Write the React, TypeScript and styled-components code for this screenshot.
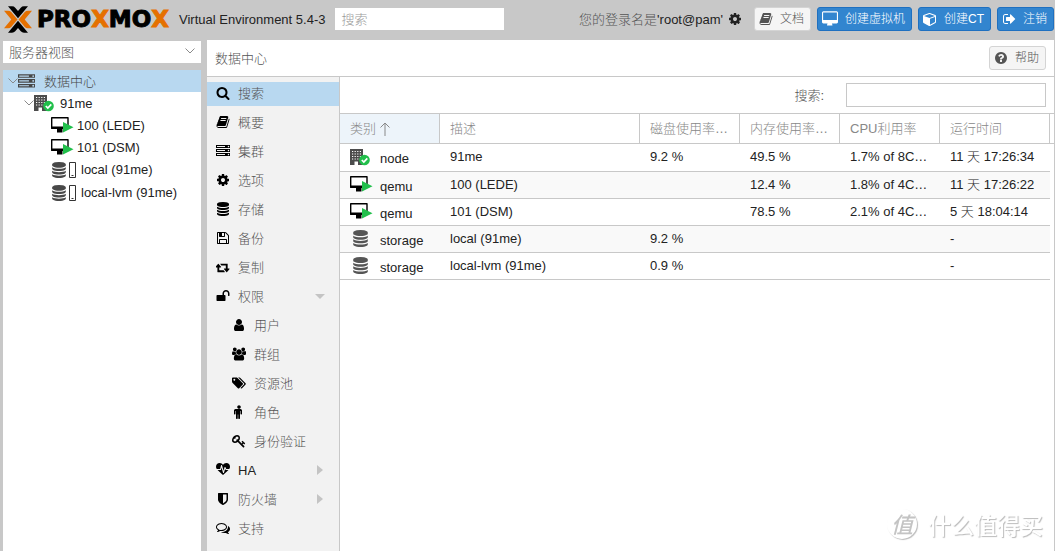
import React from 'react';
import styled, { createGlobalStyle } from 'styled-components';

const GlobalStyle = createGlobalStyle`
  *, *::before, *::after { box-sizing: border-box; }
  body {
    margin: 0;
    background: #c8c8c8;
    color: #222;
    font: 300 13px/17px "Liberation Sans", "Noto Sans CJK SC", sans-serif;
  }
  button, input, select { font: inherit; color: inherit; }
  ul { list-style: none; margin: 0; padding: 0; }
`;

/* ---------- icons ---------- */

const paths = {
  search: { w: 1792, d: 'M1216 832q0-185-131.5-316.5t-316.5-131.5-316.5 131.5-131.5 316.5 131.5 316.5 316.5 131.5 316.5-131.5 131.5-316.5zm512 832q0 52-38 90t-90 38q-54 0-90-38l-343-342q-179 124-399 124-143 0-273.5-55.5t-225-150-150-225-55.5-273.5 55.5-273.5 150-225 225-150 273.5-55.5 273.5 55.5 225 150 150 225 55.5 273.5q0 220-124 399l343 343q37 37 37 90z' },
  book: { w: 1792, d: 'M1703 478q40 57 18 129l-275 906q-19 64-76.5 107.5t-122.5 43.5h-923q-77 0-148.5-53.5t-99.5-131.5q-24-67-2-127 0-4 3-27t4-37q1-8-3-21.5t-3-19.5q2-11 8-21t16.5-23.5 16.5-23.5q23-38 45-91.5t30-91.5q3-10 .5-30t-.5-28q3-11 17-28t17-23q21-36 42-92t25-90q1-9-2.5-32t.5-28q4-13 22-30.5t22-22.5q19-26 42.5-84.5t27.5-96.5q1-8-3-25.5t-2-26.5q2-8 9-18t18-23 17-21q8-12 16.5-30.5t15-35 16-36 19.5-32 26.5-23.5 36-11.5 47.5 5.5l-1 3q38-9 51-9h761q74 0 114 56t18 130l-274 906q-36 119-71.5 153.5t-128.5 34.5h-869q-27 0-38 15-11 16-1 43 24 70 144 70h923q29 0 56-15.5t35-41.5l300-987q7-22 5-57 38 15 59 43zm-1064 2q-4 13 2 22.5t20 9.5h608q13 0 25.5-9.5t16.5-22.5l21-64q4-13-2-22.5t-20-9.5h-608q-13 0-25.5 9.5t-16.5 22.5zm-83 256q-4 13 2 22.5t20 9.5h608q13 0 25.5-9.5t16.5-22.5l21-64q4-13-2-22.5t-20-9.5h-608q-13 0-25.5 9.5t-16.5 22.5z' },
  server: { w: 1792, d: 'M128 1408h1024v-128h-1024v128zm0-512h1024v-128h-1024v128zm1568 448q0-40-28-68t-68-28-68 28-28 68 28 68 68 28 68-28 28-68zm-1568-960h1024v-128h-1024v128zm1568 448q0-40-28-68t-68-28-68 28-28 68 28 68 68 28 68-28 28-68zm0-512q0-40-28-68t-68-28-68 28-28 68 28 68 68 28 68-28 28-68zm96 832v384h-1792v-384h1792zm0-512v384h-1792v-384h1792zm0-512v384h-1792v-384h1792z' },
  gear: { w: 1792, d: 'M1152 896q0-106-75-181t-181-75-181 75-75 181 75 181 181 75 181-75 75-181zm512-109v222q0 12-8 23t-20 13l-185 28q-19 54-39 91 35 50 107 138 10 12 10 25t-9 23q-27 37-99 108t-94 71q-12 0-26-9l-138-108q-44 23-91 38-16 136-29 186-7 28-36 28h-222q-14 0-24.5-8.5t-11.5-21.5l-28-184q-49-16-90-37l-141 107q-10 9-25 9-14 0-25-11-126-114-165-168-7-10-7-23 0-12 8-23 15-21 51-66.5t54-70.5q-27-50-41-99l-183-27q-13-2-21-12.5t-8-23.5v-222q0-12 8-23t19-13l186-28q14-46 39-92-40-57-107-138-10-12-10-24 0-10 9-23 26-36 98.5-107.5t94.5-71.5q13 0 26 10l138 107q44-23 91-38 16-136 29-186 7-28 36-28h222q14 0 24.5 8.5t11.5 21.5l28 184q49 16 90 37l142-107q9-9 24-9 13 0 25 10 129 119 165 170 7 8 7 22 0 12-8 23-15 21-51 66.5t-54 70.5q26 50 41 98l183 28q13 2 21 12.5t8 23.5z' },
  database: { w: 1792, d: 'M896 768q237 0 443-43t325-127v170q0 69-103 128t-280 93.5-385 34.5-385-34.5-280-93.5-103-128v-170q119 84 325 127t443 43zm0 768q237 0 443-43t325-127v170q0 69-103 128t-280 93.5-385 34.5-385-34.5-280-93.5-103-128v-170q119 84 325 127t443 43zm0-384q237 0 443-43t325-127v170q0 69-103 128t-280 93.5-385 34.5-385-34.5-280-93.5-103-128v-170q119 84 325 127t443 43zm0-1152q208 0 385 34.5t280 93.5 103 128v128q0 69-103 128t-280 93.5-385 34.5-385-34.5-280-93.5-103-128v-128q0-69 103-128t280-93.5 385-34.5z' },
  floppy: { w: 1792, d: 'M512 1536h768v-384h-768v384zm896 0h128v-896q0-14-10-38.5t-20-34.5l-281-281q-10-10-34-20t-39-10v416q0 40-28 68t-68 28h-576q-40 0-68-28t-28-68v-416h-128v1280h128v-416q0-40 28-68t68-28h832q40 0 68 28t28 68v416zm-384-928v-320q0-13-9.5-22.5t-22.5-9.5h-192q-13 0-22.5 9.5t-9.5 22.5v320q0 13 9.5 22.5t22.5 9.5h192q13 0 22.5-9.5t9.5-22.5zm640 32v928q0 40-28 68t-68 28h-1344q-40 0-68-28t-28-68v-1344q0-40 28-68t68-28h928q40 0 88 20t76 48l280 280q28 28 48 76t20 88z' },
  retweet: { w: 1920, d: 'M1216 1568q0 13-9.5 22.5t-22.5 9.5h-960q-8 0-13.5-2t-9-7-5.5-8-3-11.5-1-11.5v-600h-192q-26 0-45-19t-19-45q0-24 15-41l320-384q19-22 49-22t49 22l320 384q15 17 15 41 0 26-19 45t-45 19h-192v384h576q16 0 25 11l160 192q7 10 7 21zm640-416q0 24-15 41l-320 384q-20 23-49 23t-49-23l-320-384q-15-17-15-41 0-26 19-45t45-19h192v-384h-576q-16 0-25-12l-160-192q-7-9-7-20 0-13 9.5-22.5t22.5-9.5h960q8 0 13.5 2t9 7 5.5 8 3 11.5 1 11.5v600h192q26 0 45 19t19 45z' },
  unlock: { w: 1792, d: 'M1728 576v256q0 26-19 45t-45 19h-64q-26 0-45-19t-19-45v-256q0-106-75-181t-181-75-181 75-75 181v192h96q40 0 68 28t28 68v576q0 40-28 68t-68 28h-960q-40 0-68-28t-28-68v-576q0-40 28-68t68-28h672v-192q0-185 131.5-316.5t316.5-131.5 316.5 131.5 131.5 316.5z' },
  user: { w: 1792, d: 'M1536 1399q0 109-62.5 187t-150.5 78h-854q-88 0-150.5-78t-62.5-187q0-85 8.5-160.5t31.5-152 58.5-131 94-89 134.5-34.5q131 128 313 128t313-128q76 0 134.5 34.5t94 89 58.5 131 31.5 152 8.5 160.5zm-256-887q0 159-112.5 271.5t-271.5 112.5-271.5-112.5-112.5-271.5 112.5-271.5 271.5-112.5 271.5 112.5 112.5 271.5z' },
  users: { w: 1920, d: 'M593 896q-162 5-265 128h-134q-82 0-138-40.5t-56-118.5q0-353 124-353 6 0 43.5 21t97.5 42.5 119 21.5q67 0 133-23-5 37-5 66 0 159 93 293zm1071 637q0 120-73 189.5t-194 69.5h-874q-121 0-194-69.5t-73-189.5q0-53 3.5-103.5t14-109 26.5-108.5 43-97.5 62-81 85.5-53.5 111.5-20q10 0 43 21.5t73 48 107 48 135 21.5 135-21.5 107-48 73-48 43-21.5q61 0 111.5 20t85.5 53.5 62 81 43 97.5 26.5 108.5 14 109 3.5 103.5zm-1024-1277q0 106-75 181t-181 75-181-75-75-181 75-181 181-75 181 75 75 181zm704 384q0 159-112.5 271.5t-271.5 112.5-271.5-112.5-112.5-271.5 112.5-271.5 271.5-112.5 271.5 112.5 112.5 271.5zm576 225q0 78-56 118.5t-138 40.5h-134q-103-123-265-128 93-134 93-293 0-29-5-66 66 23 133 23 59 0 119-21.5t97.5-42.5 43.5-21q124 0 124 353zm-128-609q0 106-75 181t-181 75-181-75-75-181 75-181 181-75 181 75 75 181z' },
  tags: { w: 1920, d: 'M448 448q0-53-37.5-90.5t-90.5-37.5-90.5 37.5-37.5 90.5 37.5 90.5 90.5 37.5 90.5-37.5 37.5-90.5zm1067 576q0 53-37 90l-491 492q-39 37-91 37-53 0-90-37l-715-716q-38-37-64.5-101t-26.5-117v-416q0-52 38-90t90-38h416q53 0 117 26.5t102 64.5l715 714q37 39 37 91zm384 0q0 53-37 90l-491 492q-39 37-91 37-36 0-59-14t-53-45l470-470q37-37 37-90 0-52-37-91l-715-714q-38-38-102-64.5t-117-26.5h224q53 0 117 26.5t102 64.5l715 714q37 39 37 91z' },
  male: { w: 1792, d: 'M1280 704v416q0 40-28 68t-68 28-68-28-28-68v-352h-64v912q0 46-33 79t-79 33-79-33-33-79v-464h-64v464q0 46-33 79t-79 33-79-33-33-79v-912h-64v352q0 40-28 68t-68 28-68-28-28-68v-416q0-80 56-136t136-56h640q80 0 136 56t56 136zm-160-448q0 93-65.5 158.5t-158.5 65.5-158.5-65.5-65.5-158.5 65.5-158.5 158.5-65.5 158.5 65.5 65.5 158.5z' },
  key: { w: 1792, d: 'M832 512q0-80-56-136t-136-56-136 56-56 136q0 42 19 83-41-19-83-19-80 0-136 56t-56 136 56 136 136 56 136-56 56-136q0-42-19-83 41 19 83 19 80 0 136-56t56-136zm851 704q0 17-49 66t-66 49q-9 0-28.5-16t-36.5-33-38.5-40-24.5-26l-96 96 220 220q28 28 28 68 0 42-39 81t-81 39q-40 0-68-28l-671-671q-176 131-365 131-163 0-265.5-102.5t-102.5-265.5q0-160 95-313t248-248 313-95q163 0 265.5 102.5t102.5 265.5q0 189-131 365l355 355 96-96q-3-3-26-24.5t-40-38.5-33-36.5-16-28.5q0-17 49-66t66-49q13 0 23 10 6 6 46 44.5t82 79.5 86.5 86 73 78 28.5 41z' },
  heartbeat: { w: 1792, d: 'M1280 896h305q-5 6-10 10.5t-9 7.5l-3 4-623 600q-18 18-44 18t-44-18l-624-602q-5-2-21-20h369q22 0 39.5-13.5t22.5-34.5l70-281 190 667q6 20 23 33t39 13q21 0 38-13t23-33l146-485 56 112q18 35 57 35zm512-428q0 145-103 300h-369l-111-221q-8-17-25.5-27t-36.5-8q-45 5-56 46l-129 430-196-686q-6-20-23.5-33t-39.5-13-39 13.5-22 34.5l-116 464h-423q-103-155-103-300 0-220 127-344t351-124q62 0 126.5 21.5t120 58 95.5 68.5 76 68q36-36 76-68t95.5-68.5 120-58 126.5-21.5q224 0 351 124t127 344z' },
  shield: { w: 1792, d: 'M1344 960v-640h-448v1137q119-63 213-137 235-184 235-360zm192-768v768q0 86-33.5 170.5t-83 150-118 127.5-126.5 103-121 77.5-89.5 49.5-42.5 20q-12 6-26 6t-26-6q-16-7-42.5-20t-89.5-49.5-121-77.5-126.5-103-118-127.5-83-150-33.5-170.5v-768q0-26 19-45t45-19h1152q26 0 45 19t19 45z' },
  comments: { w: 1792, d: 'M704 384q-153 0-286 52t-211.5 141-78.5 191q0 82 53 158t149 132l97 56-35 84q34-20 62-39l44-31 53 10q78 14 153 14 153 0 286-52t211.5-141 78.5-191-78.5-191-211.5-141-286-52zm0-128q191 0 353.5 68.5t256.5 186.5 94 257-94 257-256.5 186.5-353.5 68.5q-86 0-176-16-124 88-278 128-36 9-86 16h-3q-11 0-20.5-8t-11.5-21q-1-3-1-6.5t.5-6.5 2-6l2.5-5 3.5-5.5 4-5 4.5-5 4-4.5q5-6 23-25t26-29.5 22.5-29 25-38.5 20.5-44q-124-72-195-177t-71-224q0-139 94-257t256.5-186.5 353.5-68.5zm822 1169q10 24 20.5 44t25 38.5 22.5 29 26 29.5 23 25q1 1 4 4.5t4.5 5 4 5 3.5 5.5l2.5 5 2 6 .5 6.5-1 6.5q-3 14-13 22t-22 7q-50-7-86-16-154-40-278-128-90 16-176 16-271 0-472-132 58 4 88 4 161 0 309-45t264-129q125-92 192-212t67-254q0-77-23-152 129 71 204 178t75 230q0 120-71 224.5t-195 176.5z' },
  desktop: { w: 1856, d: 'M1728 992v-832q0-13-9.5-22.5t-22.5-9.5h-1536q-13 0-22.5 9.5t-9.5 22.5v832q0 13 9.5 22.5t22.5 9.5h1536q13 0 22.5-9.5t9.5-22.5zm128-832v1088q0 66-47 113t-113 47h-544q0 37 16 77.5t32 71 16 43.5q0 26-19 45t-45 19h-512q-26 0-45-19t-19-45q0-14 16-44t32-70 16-78h-480q-66 0-113-47t-47-113v-1088q0-66 47-113t113-47h1536q66 0 113 47t47 113z' },
  cube: { w: 1792, d: 'M896 1629l640-349v-636l-640 233v752zm-64-865l698-254-698-254-698 254zm832-252v768q0 35-18 65t-49 47l-704 384q-28 16-61 16t-61-16l-704-384q-31-17-49-47t-18-65v-768q0-40 23-73t61-47l704-256q22-8 44-8t44 8l704 256q38 14 61 47t23 73z' },
  signOut: { w: 1664, d: 'M704 1440q0 4 1 20t.5 26.5-3 23.5-10 19.5-20.5 6.5h-320q-119 0-203.5-84.5t-84.5-203.5v-704q0-119 84.5-203.5t203.5-84.5h320q13 0 22.5 9.5t9.5 22.5q0 4 1 20t.5 26.5-3 23.5-10 19.5-20.5 6.5h-320q-66 0-113 47t-47 113v704q0 66 47 113t113 47h312l11.5 1 11.5 3 8 5.5 7 9 2 13.5zm928-544q0 26-19 45l-544 544q-19 19-45 19t-45-19-19-45v-288h-448q-26 0-45-19t-19-45v-384q0-26 19-45t45-19h448v-288q0-26 19-45t45-19 45 19l544 544q19 19 19 45z' },
  question: { w: 1792, d: 'M1024 1376v-192q0-14-9-23t-23-9h-192q-14 0-23 9t-9 23v192q0 14 9 23t23 9h192q14 0 23-9t9-23zm256-672q0-88-55.5-163t-138.5-116-170-41q-243 0-371 213-15 24 8 42l132 100q7 6 19 6 16 0 25-12 53-68 86-92 34-24 86-24 48 0 85.5 26t37.5 59q0 38-20 61t-68 45q-63 28-115.5 86.5t-52.5 125.5v36q0 14 9 23t23 9h192q14 0 23-9t9-23q0-19 21.5-49.5t54.5-49.5q32-18 49-28.5t46-35 44.5-48 28-60.5 12.5-81zm384 192q0 209-103 385.5t-279.5 279.5-385.5 103-385.5-103-279.5-279.5-103-385.5 103-385.5 279.5-279.5 385.5-103 385.5 103 279.5 279.5 103 385.5z' },
};
type IconName = keyof typeof paths;

const Svg = styled.svg`
  display: block;
  flex: none;
`;

const Icon = ({ name, size = 14 }: { name: IconName; size?: number }) => (
  <Svg width={size} height={size} viewBox={`0 0 ${paths[name].w} 1792`} fill="currentColor" aria-hidden="true">
    <path d={paths[name].d} />
  </Svg>
);

const NodeIcon = () => (
  <Svg width="20" height="18" viewBox="0 0 20 18" aria-hidden="true">
    <path d="M0 1h13v16H0z" fill="#4c4c4c" />
    <path d="M2 3.500h9.500M2 6h9.500M2 8.500h9.500M2 11h9.500" stroke="#fff" strokeWidth="1.200" strokeDasharray="1.200 1.400" />
    <path d="M4.500 13.500h3.500V17H4.500z" fill="#fff" />
    <circle cx="14.500" cy="12" r="5.300" fill="#21bf4b" />
    <path d="M11.800 12l2 2 3.500-3.700" fill="none" stroke="#fff" strokeWidth="1.700" />
  </Svg>
);

const VmIcon = () => (
  <Svg width="23" height="18" viewBox="0 0 23 18" aria-hidden="true">
    <path d="M.700 1.700h16.300v10.500H.700z" fill="#fff" stroke="#000" strokeWidth="1.400" strokeLinejoin="round" />
    <path d="M0 10.500h12v2.500H11.500v3.500H6V13H.600z" fill="#000" />
    <path d="M12 6l10.500 5.200L12 16.500z" fill="#21bf4b" />
  </Svg>
);

const StorageIcon = () => (
  <Svg width="27" height="18" viewBox="0 0 27 18" aria-hidden="true">
    <g fill="#484848" transform="translate(0 1) scale(.0089)">
      <path d={paths.database.d} />
    </g>
    <path d="M18.500 1.500h6v15h-6z" fill="#fff" stroke="#333" />
    <path d="M20.500 14.500h2" stroke="#333" />
  </Svg>
);

const Chevron = () => (
  <Svg width="10" height="6" viewBox="0 0 10 6" fill="none" stroke="#8a8a8a" aria-hidden="true">
    <path d="M.500 .500l4.500 4.500 4.500-4.500" />
  </Svg>
);

/* ---------- header ---------- */

const Page = styled.div`
  min-height: 100vh;
  display: flex;
  flex-direction: column;
`;

const TopBar = styled.header`
  display: flex;
  align-items: center;
  height: 38px;
  margin-bottom: 2px;
  padding: 0 1px 0 4px;
`;

const Brand = styled.span`
  margin-left: 5px;
  width: 134px;
  font: bold 23px/38px "DejaVu Sans", sans-serif;
  color: #000;
  -webkit-text-stroke: 1px currentColor;
  b { color: #e57000; }
`;

const Version = styled.span`
  margin-left: 8px;
  white-space: nowrap;
`;

const TopSearch = styled.input`
  width: 169px;
  height: 22px;
  margin: 0 auto 0 10px;
  padding: 0 6px;
  border: 0;
  background: #fff;
  &::placeholder { color: #999; opacity: 1; }
`;

const Login = styled.span`
  display: flex;
  align-items: center;
  gap: 5px;
  margin-right: 6px;
  white-space: nowrap;
`;

const Thin = styled.span`
  color: #555;
`;

const Button = styled.button<{ $primary?: boolean }>`
  display: flex;
  align-items: center;
  gap: 7px;
  height: 24px;
  margin-left: 6px;
  padding: 0 6px 0 4px;
  border: 1px solid ${(p) => (p.$primary ? '#1f70c0' : '#d4d4d4')};
  border-radius: 3px;
  background: ${(p) => (p.$primary ? '#3285cf' : '#f5f5f5')};
  color: ${(p) => (p.$primary ? '#fff' : '#555')};
  font-size: 12px;
  white-space: nowrap;
`;

/* ---------- panels ---------- */

const Workspace = styled.div`
  flex: 1;
  display: grid;
  grid-template-columns: 198px minmax(0, 1fr);
  column-gap: 6px;
  padding: 0 1px 0 3px;
`;

const Side = styled.aside`
  display: flex;
  flex-direction: column;
  gap: 7px;
  padding-top: 1px;
`;

const Combo = styled.label`
  position: relative;
  display: block;
  background: #fff;
  select {
    display: block;
    width: 100%;
    height: 22px;
    padding: 0 6px;
    border: 0;
    background: none;
    appearance: none;
    color: #555;
  }
  svg {
    position: absolute;
    right: 6px;
    top: 7px;
    pointer-events: none;
  }
`;

const Tree = styled.ul`
  flex: 1;
  background: #fff;
`;

const indents = [5, 21, 48];

const TreeRow = styled.li<{ $level: number; $gap: number; $active?: boolean; $tall?: boolean }>`
  display: flex;
  align-items: center;
  height: ${(p) => (p.$tall ? 23 : 22)}px;
  padding-left: ${(p) => indents[p.$level]}px;
  background: ${(p) => (p.$active ? '#b8d8f0' : 'transparent')};
  color: ${(p) => (p.$active ? '#484848' : '#222')};
  span { margin-left: ${(p) => p.$gap}px; }
`;

const Main = styled.main`
  display: flex;
  flex-direction: column;
  background: #fff;
`;

const TitleBar = styled.div`
  display: flex;
  align-items: center;
  justify-content: space-between;
  height: 37px;
  padding: 0 8px;
  border-bottom: 1px solid #c8c8c8;
`;

const Body = styled.div`
  flex: 1;
  display: grid;
  grid-template-columns: 133px minmax(0, 1fr);
`;

const Menu = styled.nav`
  display: flex;
  flex-direction: column;
  gap: 5px;
  padding-top: 5px;
  border-right: 1px solid #c8c8c8;
  background: #f2f2f2;
`;

const MenuItem = styled.a<{ $nested?: boolean; $active?: boolean }>`
  display: flex;
  align-items: center;
  gap: 8px;
  height: 24px;
  padding: 0 14px 2px ${(p) => (p.$nested ? 25 : 9)}px;
  background: ${(p) => (p.$active ? '#b8d8f0' : 'transparent')};
  color: #000;
  text-decoration: none;
`;

const MenuLabel = styled.span<{ $latin?: boolean }>`
  flex: 1;
  color: ${(p) => (p.$latin ? '#222' : '#555')};
`;

const Tri = styled.span<{ $open?: boolean }>`
  border: solid transparent;
  ${(p) =>
    p.$open
      ? 'border-width: 5px 5px 0; border-top-color: #c4c4c4;'
      : 'border-width: 5px 0 5px 6px; margin-right: 2px; border-left-color: #c4c4c4;'}
`;

const Filter = styled.label`
  display: flex;
  align-items: center;
  justify-content: flex-end;
  gap: 22px;
  height: 36px;
  padding-right: 8px;
  color: #555;
  input {
    width: 200px;
    height: 24px;
    padding: 0 6px;
    border: 1px solid #c8c8c8;
    background: #fff;
  }
`;

const Table = styled.table`
  width: 100%;
  table-layout: fixed;
  border-collapse: separate;
  border-spacing: 0;
`;

const Th = styled.th<{ $sorted?: boolean }>`
  height: 31px;
  padding: 0 10px;
  border: solid #c8c8c8;
  border-width: 1px 1px 1px 0;
  background: ${(p) => (p.$sorted ? '#edf4fa' : '#fff')};
  color: #888;
  font-weight: 300;
  text-align: left;
  white-space: nowrap;
  overflow: hidden;
  text-overflow: ellipsis;
  &:last-child { border-right: 0; padding: 0; }
`;

const SortLabel = styled.span`
  display: flex;
  align-items: center;
  gap: 4px;
`;

const Td = styled.td`
  height: 27px;
  padding: 0 10px 2px;
  border-bottom: 1px solid #c8c8c8;
  white-space: nowrap;
  overflow: hidden;
  text-overflow: ellipsis;
  &:last-child { border: 0; padding: 0; }
`;

const Tr = styled.tr`
  &:nth-child(even) ${Td}:not(:last-child) { background: #f9f9f9; }
  &:first-child ${Td} { height: 28px; }
`;

const Kind = styled.span`
  display: grid;
  grid-template-columns: 22px 1fr;
  align-items: center;
  column-gap: 8px;
  > span { padding-top: 4px; }
`;

const DbSlot = styled.i`
  padding-left: 2px;
`;

const Watermark = styled.div`
  position: fixed;
  right: 12px;
  bottom: 12px;
  display: flex;
  align-items: center;
  gap: 11px;
  color: #fff;
  font: 500 23px/30px "Noto Sans CJK SC", sans-serif;
  text-shadow: 1px 1px 1px #bbb;
  pointer-events: none;
`;

const Seal = styled.span`
  width: 30px;
  height: 30px;
  border-radius: 50%;
  box-shadow: 1px 1px 1px #bbb;
  color: #c4c4c4;
  font-size: 22px;
  line-height: 28px;
  font-style: italic;
  text-align: center;
  text-shadow: none;
`;

/* ---------- data ---------- */

const menu: { icon: IconName; label: string; nested?: boolean; arrow?: 'open' | 'closed' }[] = [
  { icon: 'search', label: '搜索' },
  { icon: 'book', label: '概要' },
  { icon: 'server', label: '集群' },
  { icon: 'gear', label: '选项' },
  { icon: 'database', label: '存储' },
  { icon: 'floppy', label: '备份' },
  { icon: 'retweet', label: '复制' },
  { icon: 'unlock', label: '权限', arrow: 'open' },
  { icon: 'user', label: '用户', nested: true },
  { icon: 'users', label: '群组', nested: true },
  { icon: 'tags', label: '资源池', nested: true },
  { icon: 'male', label: '角色', nested: true },
  { icon: 'key', label: '身份验证', nested: true },
  { icon: 'heartbeat', label: 'HA', arrow: 'closed' },
  { icon: 'shield', label: '防火墙', arrow: 'closed' },
  { icon: 'comments', label: '支持' },
];

const rows = [
  ['node', '91me', '9.2 %', '49.5 %', '1.7% of 8CPUs', '11 天 17:26:34'],
  ['qemu', '100 (LEDE)', '', '12.4 %', '1.8% of 4CPUs', '11 天 17:26:22'],
  ['qemu', '101 (DSM)', '', '78.5 %', '2.1% of 4CPUs', '5 天 18:04:14'],
  ['storage', 'local (91me)', '9.2 %', '', '', '-'],
  ['storage', 'local-lvm (91me)', '0.9 %', '', '', '-'],
];

const KindIcon = ({ kind }: { kind: string }) => {
  if (kind === 'node') return <NodeIcon />;
  if (kind === 'qemu') return <VmIcon />;
  return (
    <DbSlot>
      <Thin><Icon name="database" size={17} /></Thin>
    </DbSlot>
  );
};

export default function App() {
  return (
    <Page>
      <GlobalStyle />
      <TopBar>
        <Svg width="28" height="27" viewBox="0 0 28 27" role="img" aria-label="Proxmox">
          <path d="M0 4.700h4q2 0 3.200 1.400l6.300 7.400-6.300 7.400Q6 22.300 4 22.300H0l7.300-8.800z" fill="#e57000" />
          <path d="M28 4.700h-4q-2 0-3.200 1.400l-6.300 7.400 6.300 7.400q1.200 1.400 3.200 1.400h4l-7.300-8.800z" fill="#e57000" />
          <path d="M4 .300h4q2 0 3.200 1.400L14 5l2.800-3.300Q18 .300 20 .300h4L14 12.300z" fill="#000" />
          <path d="M4 26.700h4q2 0 3.200-1.400L14 22l2.800 3.300q1.200 1.400 3.200 1.400h4L14 14.700z" fill="#000" />
        </Svg>
        <Brand>PRO<b>X</b>MO<b>X</b></Brand>
        <Version>Virtual Environment 5.4-3</Version>
        <TopSearch placeholder="搜索" aria-label="搜索" />
        <Login>
          <span><Thin>您的登录名是</Thin>'root@pam'</span>
          <Icon name="gear" />
        </Login>
        <Button><Icon name="book" />文档</Button>
        <Button $primary><Icon name="desktop" size={16} />创建虚拟机</Button>
        <Button $primary><Icon name="cube" />创建CT</Button>
        <Button $primary><Icon name="signOut" />注销</Button>
      </TopBar>
      <Workspace>
        <Side>
          <Combo>
            <select aria-label="视图"><option>服务器视图</option></select>
            <Chevron />
          </Combo>
          <Tree>
            <TreeRow $level={0} $gap={9} $active><Chevron /><Icon name="server" size={17} /><span>数据中心</span></TreeRow>
            <TreeRow $level={1} $gap={6}><Chevron /><NodeIcon /><span>91me</span></TreeRow>
            <TreeRow $level={2} $gap={3}><VmIcon /><span>100 (LEDE)</span></TreeRow>
            <TreeRow $level={2} $gap={3}><VmIcon /><span>101 (DSM)</span></TreeRow>
            <TreeRow $level={2} $gap={3} $tall><StorageIcon /><span>local (91me)</span></TreeRow>
            <TreeRow $level={2} $gap={3} $tall><StorageIcon /><span>local-lvm (91me)</span></TreeRow>
          </Tree>
        </Side>
        <Main>
          <TitleBar>
            <Thin>数据中心</Thin>
            <Button><Icon name="question" />帮助</Button>
          </TitleBar>
          <Body>
            <Menu>
              {menu.map((m, i) => (
                <MenuItem key={m.label} href="#" $nested={m.nested} $active={i === 0}>
                  <Icon name={m.icon} />
                  <MenuLabel $latin={m.label === 'HA'}>{m.label}</MenuLabel>
                  {m.arrow && <Tri $open={m.arrow === 'open'} />}
                </MenuItem>
              ))}
            </Menu>
            <div>
              <Filter>搜索:<input type="text" /></Filter>
              <Table>
                <colgroup>
                  <col width="100" />
                  <col />
                  <col width="100" />
                  <col width="100" />
                  <col width="100" />
                  <col width="110" />
                  <col width="4" />
                </colgroup>
                <thead>
                  <tr>
                    <Th $sorted>
                      <SortLabel>
                        类别
                        <Svg width="10" height="14" viewBox="0 0 10 14" fill="none" stroke="#888" aria-hidden="true">
                          <path d="M5 14V1M.500 5.500L5 1l4.500 4.500" />
                        </Svg>
                      </SortLabel>
                    </Th>
                    <Th>描述</Th>
                    <Th>磁盘使用率 %</Th>
                    <Th>内存使用率 %</Th>
                    <Th>CPU利用率</Th>
                    <Th>运行时间</Th>
                    <Th />
                  </tr>
                </thead>
                <tbody>
                  {rows.map((r) => (
                    <Tr key={r[1]}>
                      <Td><Kind><KindIcon kind={r[0]} /><span>{r[0]}</span></Kind></Td>
                      {r.slice(1).map((c, i) => <Td key={i}>{c}</Td>)}
                      <Td />
                    </Tr>
                  ))}
                </tbody>
              </Table>
            </div>
          </Body>
        </Main>
      </Workspace>
      <Watermark><Seal>值</Seal>什么值得买</Watermark>
    </Page>
  );
}
